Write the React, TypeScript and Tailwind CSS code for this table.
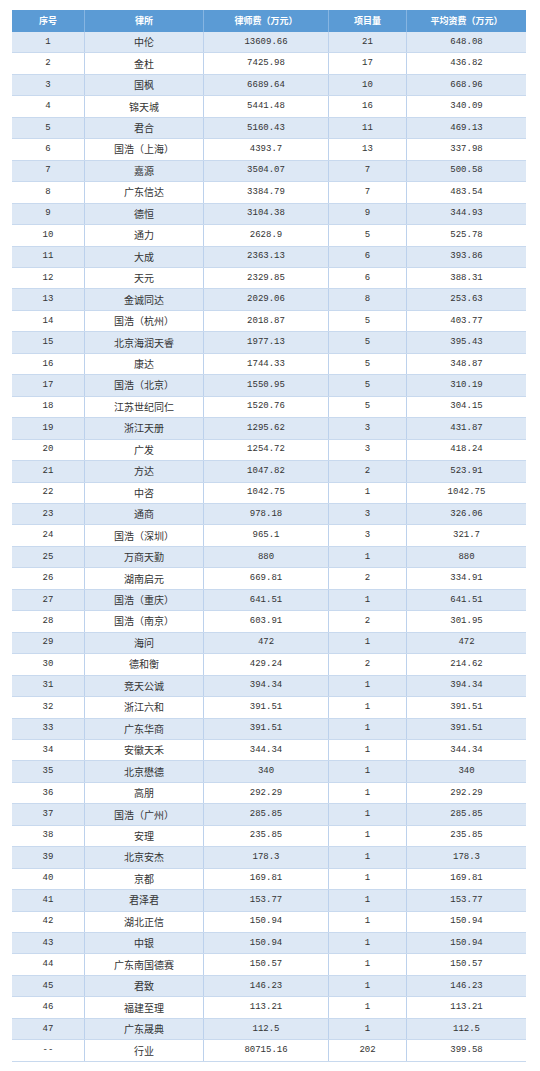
import React from 'react';

type Row = [string, string, string, string, string];

const rows: Row[] = [
  ['1', '中伦', '13609.66', '21', '648.08'],
  ['2', '金杜', '7425.98', '17', '436.82'],
  ['3', '国枫', '6689.64', '10', '668.96'],
  ['4', '锦天城', '5441.48', '16', '340.09'],
  ['5', '君合', '5160.43', '11', '469.13'],
  ['6', '国浩（上海）', '4393.7', '13', '337.98'],
  ['7', '嘉源', '3504.07', '7', '500.58'],
  ['8', '广东信达', '3384.79', '7', '483.54'],
  ['9', '德恒', '3104.38', '9', '344.93'],
  ['10', '通力', '2628.9', '5', '525.78'],
  ['11', '大成', '2363.13', '6', '393.86'],
  ['12', '天元', '2329.85', '6', '388.31'],
  ['13', '金诚同达', '2029.06', '8', '253.63'],
  ['14', '国浩（杭州）', '2018.87', '5', '403.77'],
  ['15', '北京海润天睿', '1977.13', '5', '395.43'],
  ['16', '康达', '1744.33', '5', '348.87'],
  ['17', '国浩（北京）', '1550.95', '5', '310.19'],
  ['18', '江苏世纪同仁', '1520.76', '5', '304.15'],
  ['19', '浙江天册', '1295.62', '3', '431.87'],
  ['20', '广发', '1254.72', '3', '418.24'],
  ['21', '方达', '1047.82', '2', '523.91'],
  ['22', '中咨', '1042.75', '1', '1042.75'],
  ['23', '通商', '978.18', '3', '326.06'],
  ['24', '国浩（深圳）', '965.1', '3', '321.7'],
  ['25', '万商天勤', '880', '1', '880'],
  ['26', '湖南启元', '669.81', '2', '334.91'],
  ['27', '国浩（重庆）', '641.51', '1', '641.51'],
  ['28', '国浩（南京）', '603.91', '2', '301.95'],
  ['29', '海问', '472', '1', '472'],
  ['30', '德和衡', '429.24', '2', '214.62'],
  ['31', '竞天公诚', '394.34', '1', '394.34'],
  ['32', '浙江六和', '391.51', '1', '391.51'],
  ['33', '广东华商', '391.51', '1', '391.51'],
  ['34', '安徽天禾', '344.34', '1', '344.34'],
  ['35', '北京懋德', '340', '1', '340'],
  ['36', '高朋', '292.29', '1', '292.29'],
  ['37', '国浩（广州）', '285.85', '1', '285.85'],
  ['38', '安理', '235.85', '1', '235.85'],
  ['39', '北京安杰', '178.3', '1', '178.3'],
  ['40', '京都', '169.81', '1', '169.81'],
  ['41', '君泽君', '153.77', '1', '153.77'],
  ['42', '湖北正信', '150.94', '1', '150.94'],
  ['43', '中银', '150.94', '1', '150.94'],
  ['44', '广东南国德赛', '150.57', '1', '150.57'],
  ['45', '君致', '146.23', '1', '146.23'],
  ['46', '福建至理', '113.21', '1', '113.21'],
  ['47', '广东晟典', '112.5', '1', '112.5'],
  ['--', '行业', '80715.16', '202', '399.58'],
];

const headers = ['序号', '律所', '律师费（万元）', '项目量', '平均资费（万元）'];

const grid = 'grid grid-cols-[73px_119px_125px_78px_119px]';
const mono = "font-['Liberation_Mono','DejaVu_Sans_Mono',monospace] text-[9px]";
const cjk = "font-['Noto_Sans_CJK_SC','Noto_Sans',sans-serif] text-[10px]";

export default function App() {
  return (
    <div className="w-[540px] h-[1071px] bg-white pt-[10px] pl-[12px] text-[#333333]">
      <div className="w-[514px]">
        {/* header */}
        <div className={`${grid} h-[22px] bg-[#5b9bd5] text-white font-bold text-[9px] font-['Noto_Sans_CJK_SC',sans-serif]`}>
          {headers.map((h, i) => (
            <div
              key={h}
              className={`flex items-center justify-center ${i < 4 ? 'border-r border-[#86b5e2]' : ''}`}
            >
              {h}
            </div>
          ))}
        </div>

        {/* body */}
        {rows.map((r, idx) => (
          <div
            key={r[0] + r[1]}
            className={`${grid} h-[21.46px] border-b border-[#c8d9ee] ${idx % 2 === 0 ? 'bg-[#dde8f5]' : 'bg-white'}`}
          >
            {r.map((cell, i) => (
              <div
                key={i}
                className={`flex items-center justify-center leading-none ${i === 1 ? cjk : mono} ${i < 4 ? 'border-r border-[#bcd1ec]' : ''}`}
              >
                {cell}
              </div>
            ))}
          </div>
        ))}
      </div>
    </div>
  );
}
